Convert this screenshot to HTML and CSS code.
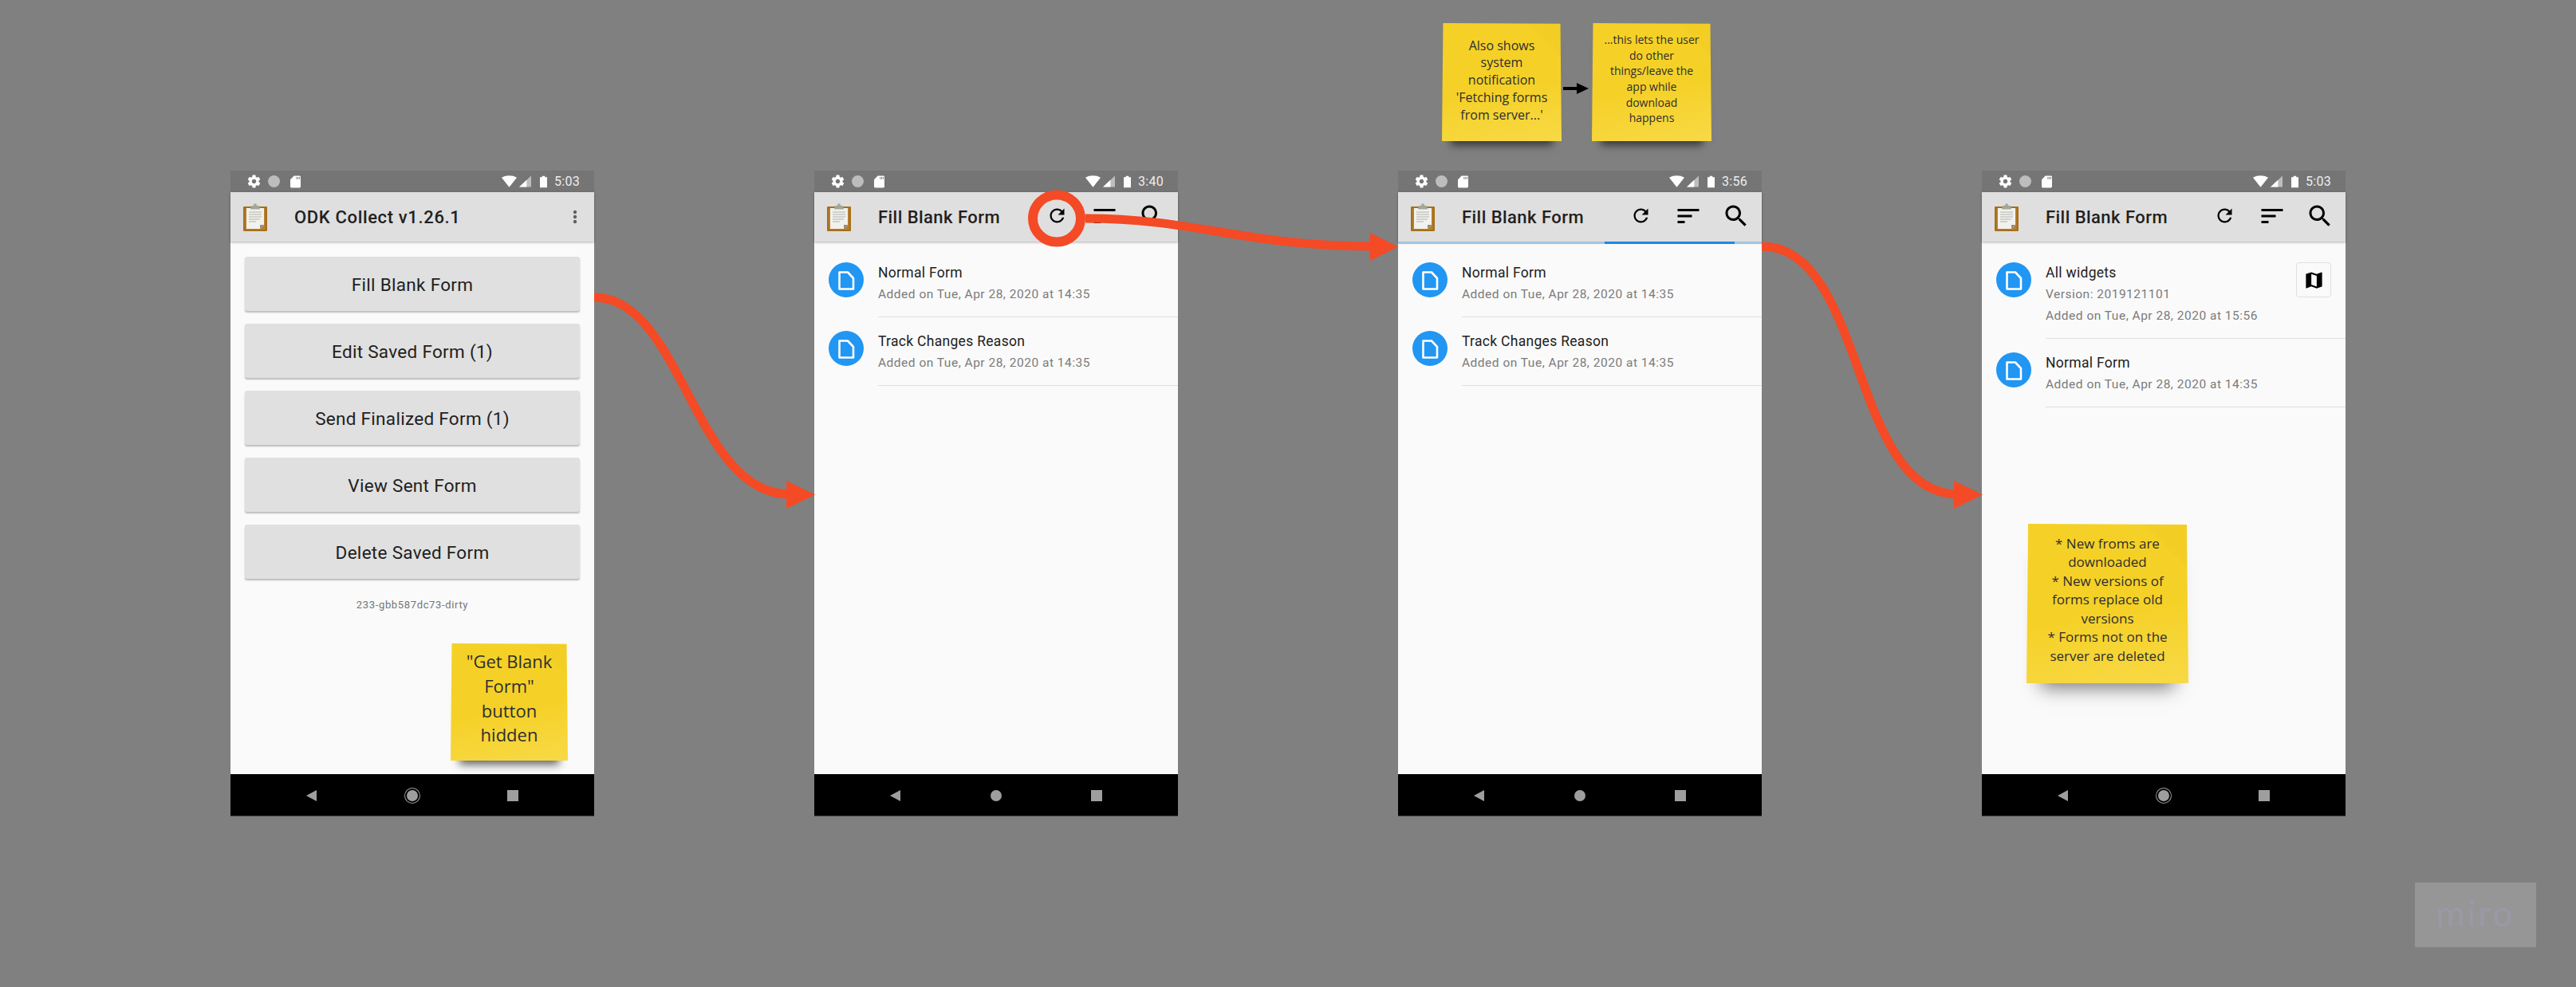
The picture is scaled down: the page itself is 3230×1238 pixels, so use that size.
FILE: index.html
```html
<!DOCTYPE html>
<html>
<head>
	<title>Fill Blank Form flow</title>
	<link rel="stylesheet" href="styles.css">
</head>
<body>
	<!-- Shared icons, used by every phone below. -->
	<svg class="iconDefs" xmlns="http://www.w3.org/2000/svg">
		<symbol id="iGear" viewBox="0 0 24 24"><path d="M19.43 12.98c.04-.32.07-.64.07-.98s-.03-.66-.07-.98l2.11-1.65c.19-.15.24-.42.12-.64l-2-3.46c-.12-.22-.39-.3-.61-.22l-2.49 1c-.52-.4-1.08-.73-1.69-.98l-.38-2.65C14.46 2.18 14.25 2 14 2h-4c-.25 0-.46.18-.49.42l-.38 2.65c-.61.25-1.17.59-1.69.98l-2.49-1c-.23-.09-.49 0-.61.22l-2 3.46c-.13.22-.07.49.12.64l2.11 1.65c-.04.32-.07.65-.07.98s.03.66.07.98l-2.11 1.65c-.19.15-.24.42-.12.64l2 3.46c.12.22.39.3.61.22l2.49-1c.52.4 1.08.73 1.69.98l.38 2.65c.03.24.24.42.49.42h4c.25 0 .46-.18.49-.42l.38-2.65c.61-.25 1.17-.59 1.69-.98l2.49 1c.23.09.49 0 .61-.22l2-3.46c.12-.22.07-.49-.12-.64l-2.11-1.65zM12 15.5c-1.93 0-3.5-1.57-3.5-3.5s1.57-3.5 3.5-3.5 3.5 1.57 3.5 3.5-1.57 3.5-3.5 3.5z"/></symbol>
		<symbol id="iSd" viewBox="0 0 14 16"><path d="M5 0h7.5C13.3 0 14 .7 14 1.5v13c0 .8-.7 1.5-1.5 1.5h-11C.7 16 0 15.3 0 14.5V5zM8 1.5v3h1v-3zm2 0v3h1v-3zm2 0v3h1v-3z" fill-rule="evenodd"/></symbol>
		<symbol id="iClipboard" viewBox="0 0 30 35">
			<rect x="0" y="4" width="30" height="31" rx="1" fill="#a66f1e"/>
			<rect x="2.5" y="6" width="25" height="27" fill="#b8812f"/>
			<path d="M4 6h22v21l-5 5H4z" fill="#f1f1ee"/>
			<path d="M21 32l5-5h-5z" fill="#8d8d8d"/>
			<path d="M7 11h16M7 14h16M7 17h16M7 20h14M7 23h9" stroke="#c6c6c4" stroke-width="1.3"/>
			<path d="M10 3h3l.5-2.5h3L17 3h3l1 4.5H9z" fill="#a4a795"/>
		</symbol>
		<symbol id="iRefresh" viewBox="0 0 24 24"><path d="M17.65 6.35C16.2 4.9 14.21 4 12 4c-4.42 0-7.99 3.58-7.99 8s3.57 8 7.99 8c3.73 0 6.84-2.55 7.73-6h-2.08c-.82 2.33-3.04 4-5.65 4-3.31 0-6-2.69-6-6s2.69-6 6-6c1.66 0 3.14.69 4.22 1.78L13 11h7V4l-2.35 2.35z"/></symbol>
		<symbol id="iSort" viewBox="0 0 24 24"><path d="M3 18h6v-2H3v2zM3 6v2h18V6H3zm0 7h12v-2H3v2z"/></symbol>
		<symbol id="iSearch" viewBox="0 0 24 24"><path d="M15.5 14h-.79l-.28-.27C15.41 12.59 16 11.11 16 9.5 16 5.91 13.09 3 9.5 3S3 5.91 3 9.5 5.91 16 9.5 16c1.61 0 3.09-.59 4.23-1.57l.27.28v.79l5 4.99L20.49 19l-4.99-5zm-6 0C7.01 14 5 11.99 5 9.5S7.01 5 9.5 5 14 7.01 14 9.5 11.99 14 9.5 14z"/></symbol>
		<symbol id="iMap" viewBox="0 0 24 24"><path d="M20.5 3l-.16.03L15 5.1 9 3 3.36 4.9c-.21.07-.36.25-.36.48V20.5c0 .28.22.5.5.5l.16-.03L9 18.9l6 2.1 5.64-1.9c.21-.07.36-.25.36-.48V3.5c0-.28-.22-.5-.5-.5zM15 19l-6-2.11V5l6 2.11V19z"/></symbol>
		<symbol id="iForm" viewBox="0 0 44 44">
			<circle cx="22" cy="22" r="22" fill="#2196f3"/>
			<path d="M13.5 12.5h10.5l7 7.5v13.5h-17.5z" fill="none" stroke="#fff" stroke-width="2.6" stroke-linejoin="round"/>
		</symbol>
	</svg>

	<div class="stage">

		<!-- Main menu -->
		<section class="phone">
			<div class="statusbar">
				<svg class="sbIcon"><use href="#iGear"/></svg>
				<span class="sbDot"></span>
				<svg class="sbSd"><use href="#iSd"/></svg>
				<span class="sbRight">
					<svg class="sbWifi" viewBox="0 0 20 15"><path d="M0 2.5C5.5-1 14.5-1 20 2.5L10 15z"/></svg>
					<svg class="sbSignal" viewBox="0 0 16 15"><path d="M0 15L16 0v15z" fill="#bdbdbd"/><path d="M0 15L10 5.6V15z"/></svg>
					<svg class="sbBattery" viewBox="0 0 10 16"><path d="M3 0h4v1.5h3V16H0V1.5h3z"/></svg>
					<span class="sbTime">5:03</span>
				</span>
			</div>
			<div class="appbar">
				<svg class="appLogo"><use href="#iClipboard"/></svg>
				<h1 class="appTitle wide">ODK Collect v1.26.1</h1>
				<svg class="overflowDots" viewBox="0 0 6 18"><circle cx="3" cy="3" r="2.2"/><circle cx="3" cy="9" r="2.2"/><circle cx="3" cy="15" r="2.2"/></svg>
			</div>
			<div class="menu">
				<div class="menuButton">Fill Blank Form</div>
				<div class="menuButton">Edit Saved Form (1)</div>
				<div class="menuButton">Send Finalized Form (1)</div>
				<div class="menuButton">View Sent Form</div>
				<div class="menuButton">Delete Saved Form</div>
				<p class="version">233-gbb587dc73-dirty</p>
			</div>
			<div class="navbar">
				<span class="navCell"><span class="navBack"></span></span>
				<span class="navCell"><span class="navHome ringed"></span></span>
				<span class="navCell"><span class="navSquare"></span></span>
			</div>
		</section>

		<!-- Form list -->
		<section class="phone">
			<div class="statusbar">
				<svg class="sbIcon"><use href="#iGear"/></svg>
				<span class="sbDot"></span>
				<svg class="sbSd"><use href="#iSd"/></svg>
				<span class="sbRight">
					<svg class="sbWifi" viewBox="0 0 20 15"><path d="M0 2.5C5.5-1 14.5-1 20 2.5L10 15z"/></svg>
					<svg class="sbSignal" viewBox="0 0 16 15"><path d="M0 15L16 0v15z" fill="#bdbdbd"/><path d="M0 15L10 5.6V15z"/></svg>
					<svg class="sbBattery" viewBox="0 0 10 16"><path d="M3 0h4v1.5h3V16H0V1.5h3z"/></svg>
					<span class="sbTime">3:40</span>
				</span>
			</div>
			<div class="appbar">
				<svg class="appLogo"><use href="#iClipboard"/></svg>
				<h1 class="appTitle">Fill Blank Form</h1>
				<div class="appActions">
					<span class="action"><svg class="iconRefresh"><use href="#iRefresh"/></svg></span>
					<span class="action"><svg class="iconBig"><use href="#iSort"/></svg></span>
					<span class="action"><svg class="iconBig"><use href="#iSearch"/></svg></span>
				</div>
			</div>
			<div class="formList">
				<div class="formRow">
					<svg class="formIcon"><use href="#iForm"/></svg>
					<div class="formText">
						<div class="formName">Normal Form</div>
						<div class="formMeta">Added on Tue, Apr 28, 2020 at 14:35</div>
					</div>
				</div>
				<div class="formRow">
					<svg class="formIcon"><use href="#iForm"/></svg>
					<div class="formText">
						<div class="formName">Track Changes Reason</div>
						<div class="formMeta">Added on Tue, Apr 28, 2020 at 14:35</div>
					</div>
				</div>
			</div>
			<div class="navbar">
				<span class="navCell"><span class="navBack"></span></span>
				<span class="navCell"><span class="navHome"></span></span>
				<span class="navCell"><span class="navSquare"></span></span>
			</div>
		</section>

		<!-- Form list, refreshing -->
		<section class="phone">
			<div class="statusbar">
				<svg class="sbIcon"><use href="#iGear"/></svg>
				<span class="sbDot"></span>
				<svg class="sbSd"><use href="#iSd"/></svg>
				<span class="sbRight">
					<svg class="sbWifi" viewBox="0 0 20 15"><path d="M0 2.5C5.5-1 14.5-1 20 2.5L10 15z"/></svg>
					<svg class="sbSignal" viewBox="0 0 16 15"><path d="M0 15L16 0v15z" fill="#bdbdbd"/><path d="M0 15L10 5.6V15z"/></svg>
					<svg class="sbBattery" viewBox="0 0 10 16"><path d="M3 0h4v1.5h3V16H0V1.5h3z"/></svg>
					<span class="sbTime">3:56</span>
				</span>
			</div>
			<div class="appbar">
				<svg class="appLogo"><use href="#iClipboard"/></svg>
				<h1 class="appTitle">Fill Blank Form</h1>
				<div class="appActions">
					<span class="action"><svg class="iconRefresh"><use href="#iRefresh"/></svg></span>
					<span class="action"><svg class="iconBig"><use href="#iSort"/></svg></span>
					<span class="action"><svg class="iconBig"><use href="#iSearch"/></svg></span>
				</div>
				<div class="progress"><div class="progressBar"></div></div>
			</div>
			<div class="formList">
				<div class="formRow">
					<svg class="formIcon"><use href="#iForm"/></svg>
					<div class="formText">
						<div class="formName">Normal Form</div>
						<div class="formMeta">Added on Tue, Apr 28, 2020 at 14:35</div>
					</div>
				</div>
				<div class="formRow">
					<svg class="formIcon"><use href="#iForm"/></svg>
					<div class="formText">
						<div class="formName">Track Changes Reason</div>
						<div class="formMeta">Added on Tue, Apr 28, 2020 at 14:35</div>
					</div>
				</div>
			</div>
			<div class="navbar">
				<span class="navCell"><span class="navBack"></span></span>
				<span class="navCell"><span class="navHome"></span></span>
				<span class="navCell"><span class="navSquare"></span></span>
			</div>
		</section>

		<!-- Form list, after refresh -->
		<section class="phone">
			<div class="statusbar">
				<svg class="sbIcon"><use href="#iGear"/></svg>
				<span class="sbDot"></span>
				<svg class="sbSd"><use href="#iSd"/></svg>
				<span class="sbRight">
					<svg class="sbWifi" viewBox="0 0 20 15"><path d="M0 2.5C5.5-1 14.5-1 20 2.5L10 15z"/></svg>
					<svg class="sbSignal" viewBox="0 0 16 15"><path d="M0 15L16 0v15z" fill="#bdbdbd"/><path d="M0 15L10 5.6V15z"/></svg>
					<svg class="sbBattery" viewBox="0 0 10 16"><path d="M3 0h4v1.5h3V16H0V1.5h3z"/></svg>
					<span class="sbTime">5:03</span>
				</span>
			</div>
			<div class="appbar">
				<svg class="appLogo"><use href="#iClipboard"/></svg>
				<h1 class="appTitle">Fill Blank Form</h1>
				<div class="appActions">
					<span class="action"><svg class="iconRefresh"><use href="#iRefresh"/></svg></span>
					<span class="action"><svg class="iconBig"><use href="#iSort"/></svg></span>
					<span class="action"><svg class="iconBig"><use href="#iSearch"/></svg></span>
				</div>
			</div>
			<div class="formList">
				<div class="formRow">
					<svg class="formIcon"><use href="#iForm"/></svg>
					<div class="formText withMap">
						<div>
							<div class="formName">All widgets</div>
							<div class="formMeta">Version: 2019121101</div>
							<div class="formMeta">Added on Tue, Apr 28, 2020 at 15:56</div>
						</div>
						<span class="mapButton"><svg class="iconMap"><use href="#iMap"/></svg></span>
					</div>
				</div>
				<div class="formRow">
					<svg class="formIcon"><use href="#iForm"/></svg>
					<div class="formText">
						<div class="formName">Normal Form</div>
						<div class="formMeta">Added on Tue, Apr 28, 2020 at 14:35</div>
					</div>
				</div>
			</div>
			<div class="navbar">
				<span class="navCell"><span class="navBack"></span></span>
				<span class="navCell"><span class="navHome ringed"></span></span>
				<span class="navCell"><span class="navSquare"></span></span>
			</div>
		</section>

		<!-- Orange connectors and the black one between the top notes -->
		<svg class="connectors" viewBox="0 0 3230 1238" xmlns="http://www.w3.org/2000/svg">
			<g fill="none" stroke="#f44a25" stroke-width="11">
				<path d="M745 373C855 373 870 620 990 620"/>
				<path d="M1361 274C1500 274 1560 309 1722 309"/>
				<path d="M2209 309C2340 309 2320 620 2455 620"/>
				<ellipse cx="1325" cy="274" rx="30" ry="29.5" stroke-width="12"/>
			</g>
			<g fill="#f44a25">
				<path d="M986 603L1022 620.5 986 638z"/>
				<path d="M1718 292L1753 309.5 1718 327z"/>
				<path d="M2450 603L2486 620.5 2450 638z"/>
			</g>
			<path d="M1960 111H1980" stroke="#000" stroke-width="4"/>
			<path d="M1977 104L1992 111 1977 118z"/>
		</svg>

		<!-- Sticky notes -->
		<div class="note noteHidden"><div class="notePaper">"Get Blank Form" button hidden</div></div>
		<div class="note noteFetching"><div class="notePaper">Also shows system notification 'Fetching forms from server...'</div></div>
		<div class="note noteUser"><div class="notePaper">...this lets the user do other things/leave the app while download<br>happens</div></div>
		<div class="note noteResult"><div class="notePaper">* New froms are downloaded<br>* New versions of forms replace old versions<br>* Forms not on the server are deleted</div></div>

		<div class="watermark">miro</div>
	</div>
</body>
</html>
```

FILE: styles.css
```css
body {
	margin: 0px;
	padding: 0px;
	background-color: #808080;
	font-family: Roboto, 'Liberation Sans', sans-serif;
	color: #212121;
}
.iconDefs {
	position: absolute;
	width: 0;
	height: 0;
}
.stage {
	position: relative;
	width: 3230px;
	height: 1238px;
	box-sizing: border-box;
	padding: 214px 0 0 289px;
	display: flex;
	gap: 276px;
	align-items: flex-start;
	overflow: hidden;
	background-color: #808080;
}

/* Phone frame */
.phone {
	flex: none;
	width: 456px;
	height: 810px;
	display: flex;
	flex-direction: column;
	background-color: #fafafa;
}
.statusbar {
	flex: none;
	height: 27px;
	display: flex;
	align-items: center;
	padding: 0 18px 0 20px;
	background-color: #757575;
	fill: #fff;
}
.sbIcon {
	width: 19px;
	height: 19px;
}
.sbDot {
	width: 15px;
	height: 15px;
	margin-left: 8px;
	border-radius: 50%;
	background-color: #bdbdbd;
}
.sbSd {
	width: 13px;
	height: 16px;
	margin-left: 13px;
}
.sbRight {
	margin-left: auto;
	display: flex;
	align-items: center;
}
.sbWifi {
	width: 19px;
	height: 15px;
}
.sbSignal {
	width: 15px;
	height: 15px;
	margin-left: 3px;
}
.sbBattery {
	width: 9px;
	height: 16px;
	margin-left: 11px;
}
.sbTime {
	margin-left: 9px;
	font-size: 16px;
	line-height: 20px;
	letter-spacing: 0.3px;
	color: #eeeeee;
}

/* App bar */
.appbar {
	flex: none;
	position: relative;
	z-index: 1;
	height: 62px;
	display: flex;
	align-items: center;
	background-color: #dfdfdf;
	box-shadow: 0 1px 3px rgba(0, 0, 0, 0.3);
}
.appLogo {
	flex: none;
	width: 30px;
	height: 35px;
	margin-left: 16px;
	margin-top: 1px;
}
.appTitle {
	margin: 1px 0 0 34px;
	font-size: 22px;
	font-weight: 500;
	letter-spacing: 0.45px;
	color: #212121;
}
.appTitle.wide {
	letter-spacing: 0.65px;
}
.overflowDots {
	width: 6px;
	height: 18px;
	margin-left: auto;
	margin-right: 21px;
	fill: #616161;
}
.appActions {
	margin-left: auto;
	margin-right: 2px;
	display: flex;
}
.action {
	width: 60px;
	height: 36px;
	display: flex;
	align-items: center;
	justify-content: center;
	margin-top: -3px;
}
.iconRefresh {
	width: 27px;
	height: 27px;
}
.iconBig {
	width: 36px;
	height: 36px;
}
.progress {
	position: absolute;
	left: 0;
	right: 0;
	bottom: -3px;
	height: 3px;
	background-color: #a3c4e4;
}
.progressBar {
	width: 163px;
	height: 3px;
	margin-left: 259px;
	background-color: #1e88e5;
}

/* Main menu */
.menu {
	flex: 1;
	padding: 19px 18px 0;
	display: flex;
	flex-direction: column;
	gap: 16px;
}
.menuButton {
	height: 68px;
	line-height: 70px;
	text-align: center;
	font-size: 22.5px;
	letter-spacing: 0.3px;
	background-color: #e0e0e0;
	border-radius: 3px;
	box-shadow: 0 2px 2px rgba(0, 0, 0, 0.25);
}
.version {
	margin: 7px 0 0;
	line-height: 20px;
	text-align: center;
	font-size: 13px;
	letter-spacing: 0.65px;
	color: #757575;
}

/* Form list */
.formList {
	flex: 1;
	padding-top: 9px;
}
.formRow {
	display: flex;
	padding-top: 17px;
}
.formIcon {
	flex: none;
	width: 44px;
	height: 44px;
	margin: 0 18px;
}
.formText {
	flex: 1;
	display: flex;
	flex-direction: column;
	padding-bottom: 14px;
	border-bottom: 1px solid #e0e0e0;
}
.formText.withMap {
	flex-direction: row;
	justify-content: space-between;
	align-items: flex-start;
}
.formName {
	height: 27px;
	line-height: 27px;
	font-size: 17.5px;
	letter-spacing: 0.3px;
	color: #212121;
}
.formMeta {
	height: 27px;
	line-height: 27px;
	font-size: 15.5px;
	letter-spacing: 0.5px;
	color: #7b7b7b;
}
.mapButton {
	flex: none;
	box-sizing: border-box;
	width: 44px;
	height: 44px;
	margin-right: 18px;
	display: flex;
	align-items: center;
	justify-content: center;
	border: 1px solid #e0e0e0;
	border-radius: 4px;
}
.iconMap {
	width: 27px;
	height: 27px;
}

/* Android nav bar */
.navbar {
	flex: none;
	height: 53px;
	display: flex;
	justify-content: center;
	background-color: #000;
	box-shadow: inset 0 -1px 0 #444;
}
.navCell {
	width: 126px;
	display: flex;
	align-items: center;
	justify-content: center;
}
.navBack {
	width: 0;
	height: 0;
	margin-right: 2px;
	border-style: solid;
	border-width: 7.5px 13px 7.5px 0;
	border-color: transparent #9e9e9e transparent transparent;
}
.navHome {
	width: 14px;
	height: 14px;
	border-radius: 50%;
	background-color: #9e9e9e;
}
.navHome.ringed {
	box-shadow: 0 0 0 2px #000, 0 0 0 3px #9e9e9e;
}
.navSquare {
	width: 14px;
	height: 14px;
	background-color: #9e9e9e;
}

/* Overlays */
.connectors {
	position: absolute;
	left: 0;
	top: 0;
	width: 3230px;
	height: 1238px;
	z-index: 2;
}
.note {
	position: absolute;
	z-index: 3;
	box-shadow: 0 16px 10px -11px rgba(0, 0, 0, 0.6);
}
.notePaper {
	box-sizing: border-box;
	width: 100%;
	height: 100%;
	display: flex;
	align-items: center;
	justify-content: center;
	text-align: center;
	font-family: 'Open Sans', 'Noto Sans', sans-serif;
	color: #2e2e30;
	background:
		linear-gradient(225deg, rgba(226, 180, 20, 0.12) 0, rgba(226, 180, 20, 0.12) 13%, rgba(0, 0, 0, 0) 15%),
		linear-gradient(170deg, #f5d127 0, #f5d127 55%, #f8d946 100%);
	clip-path: polygon(1% 0, 99% 0.5%, 100% 100%, 0 100%);
}
.noteHidden {
	left: 565px;
	top: 807px;
	width: 147px;
	height: 147px;
	font-size: 22px;
	line-height: 30.6px;
}
.noteHidden .notePaper {
	padding: 0 16px 10px;
}
.noteFetching {
	left: 1808px;
	top: 29px;
	width: 150px;
	height: 148px;
	font-size: 16px;
	line-height: 21.7px;
}
.noteFetching .notePaper {
	padding: 0 6px 4px;
}
.noteUser {
	left: 1996px;
	top: 29px;
	width: 150px;
	height: 148px;
	font-size: 14px;
	line-height: 19.6px;
}
.noteUser .notePaper {
	padding: 0 14px 8px;
}
.noteResult {
	left: 2541px;
	top: 657px;
	width: 203px;
	height: 200px;
	font-size: 17px;
	line-height: 23.4px;
	box-shadow: 0 24px 22px -18px rgba(0, 0, 0, 0.5);
}
.noteResult .notePaper {
	padding: 0 20px 10px;
}
.watermark {
	position: absolute;
	left: 3028px;
	top: 1107px;
	width: 152px;
	height: 81px;
	line-height: 76px;
	text-align: center;
	font-family: Lato, sans-serif;
	font-size: 44px;
	letter-spacing: 3px;
	color: #9b99a6;
	background-color: #969696;
}
```
